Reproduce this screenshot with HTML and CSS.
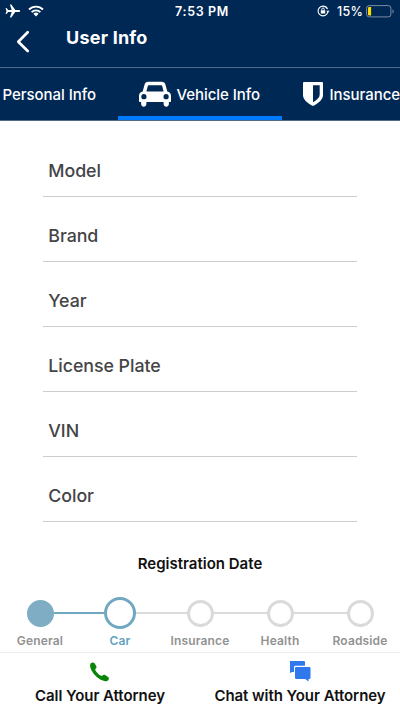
FILE: index.html
```
<!DOCTYPE html>
<html lang="en">
<head>
<meta charset="utf-8">
<title>User Info</title>
<link rel="stylesheet" href="styles.css">
</head>
<body>
<div class="status">
  <div class="status-left">
    <svg class="plane" width="16" height="14" viewBox="0 0 16 14"><path d="M15.2 7c0-.7-.8-1-1.6-1h-3.3L6.3.6H4.9L6.7 6H3.2L1.6 4H.6l.8 3-.8 3h1l1.6-2h3.5l-1.8 5.4h1.4L10.3 8h3.3c.8 0 1.6-.3 1.6-1z" fill="#fff"/></svg>
    <svg class="wifi" width="16" height="12" viewBox="0 0 16 12"><g fill="none" stroke="#fff" stroke-width="1.8"><path d="M1 4.5a10 10 0 0 1 14 0"/><path d="M3.6 7.2a6.3 6.3 0 0 1 8.800 0"/></g><path d="M8 11.400 5.400 8.800a3.800 3.800 0 0 1 5.200 0z" fill="#fff"/></svg>
  </div>
  <div class="time">7:53 PM</div>
  <div class="status-right">
    <svg width="13" height="12" viewBox="0 0 13 12"><circle cx="6" cy="6" r="4.9" fill="none" stroke="#fff" stroke-width="1.1" stroke-dasharray="28 2.8"/><path d="m9.3 5.8 1.7 2 1.6-2z" fill="#fff"/><rect x="3.8" y="5.2" width="4.4" height="3.4" rx=".4" fill="#fff"/><path d="M4.8 5.3V4.2a1.2 1.2 0 0 1 2.4 0v1.1" fill="none" stroke="#fff" stroke-width=".9"/></svg>
    <span class="percent">15%</span>
    <svg width="29" height="13" viewBox="0 0 29 13"><rect x=".6" y=".6" width="24.3" height="11.3" rx="2.6" fill="none" stroke="#7c8ba3" stroke-width="1"/><path d="M26.5 4.2c1.7.8 1.7 3.4 0 4.2z" fill="#7c8ba3"/><path d="M3.2 2.1h1.9v8.3H3.2A1.2 1.2 0 0 1 2 9.2V3.3a1.2 1.2 0 0 1 1.2-1.2z" fill="#fd0"/></svg>
  </div>
</div>
<header class="header">
  <svg width="14" height="24" viewBox="0 0 14 24"><path d="M11.7 2.3 2.3 11.800l9.400 9.200" fill="none" stroke="#fff" stroke-width="2.7" stroke-linecap="round" stroke-linejoin="round"/></svg>
  <h1>User Info</h1>
</header>
<nav class="tabs">
  <div class="tab tab-personal"><span>Personal Info</span></div>
  <div class="tab tab-vehicle">
    <svg width="34" height="26" viewBox="0 0 34 26"><path fill="#fff" fill-rule="evenodd" d="M10.3.8h13.400c2 0 3.300 1 3.800 2.900l1.800 6.900c2.300.4 3.700 2 3.700 4.300v5.300c0 .5-.3.8-.8.8h-1.300v1.700c0 3.900-5.300 3.900-5.300 0V21H8.400v1.700c0 3.900-5.300 3.900-5.300 0V21H1.800c-.5 0-.8-.3-.8-.8v-5.300c0-2.300 1.400-3.900 3.700-4.300l1.800-6.900C7 1.800 8.300.8 10.300.8zM10.700 4.200c-.5 0-.8.2-.9.7L8.400 10.500h17.200L24.200 4.900c-.1-.5-.4-.7-.9-.7zM5.900 13.100a2.600 2.600 0 1 0 0 5.200 2.600 2.600 0 0 0 0-5.200zm22.200 0a2.600 2.600 0 1 0 0 5.200 2.600 2.600 0 0 0 0-5.200z"/></svg>
    <span>Vehicle Info</span>
  </div>
  <div class="tab tab-insurance">
    <svg width="22" height="26" viewBox="0 0 22 26"><path fill="#fff" fill-rule="evenodd" d="M1.900 1h18.200c.5 0 .9.400.9.900v12.200c0 4.700-4.500 8.400-10 11C5.500 22.500 1 18.800 1 14.100V1.900c0-.5.400-.9.900-.9zM11 4.300v17c4.200-2.400 6.700-4.700 6.700-7.700V4.300z"/></svg>
    <span>Insurance</span>
  </div>
</nav>
<main>
  <form class="form">
    <div class="field"><span>Model</span></div>
    <div class="field"><span>Brand</span></div>
    <div class="field"><span>Year</span></div>
    <div class="field"><span>License Plate</span></div>
    <div class="field"><span>VIN</span></div>
    <div class="field"><span>Color</span></div>
  </form>
  <div class="date">Registration Date</div>
  <div class="stepper">
    <div class="step done"><div class="rail"><i></i><b></b><i class="blue"></i></div><span>General</span></div>
    <div class="step active"><div class="rail"><i class="blue"></i><b></b><i></i></div><span>Car</span></div>
    <div class="step"><div class="rail"><i></i><b></b><i></i></div><span>Insurance</span></div>
    <div class="step"><div class="rail"><i></i><b></b><i></i></div><span>Health</span></div>
    <div class="step"><div class="rail"><i></i><b></b><i></i></div><span>Roadside</span></div>
  </div>
</main>
<footer class="footer">
  <div class="action call">
    <svg width="20" height="20" viewBox="0 0 20 20"><path fill="#0a850a" d="M1.100 1.100C2.300.2 4 .3 4.900 1.700l1.300 2.200c.6 1 .3 2-.6 2.800-.6.500-.5 1 .1 2 1.400 2.100 2.900 3.600 4.900 4.900.8.500 1.300.6 1.900 0 .9-.9 1.900-1 2.900-.4l2.400 1.500c1.300.8 1.400 2.200.6 3.200-1.100 1.400-3 1.700-5.500.7C7.200 16.500 2.500 11.400.6 6.200-.1 4-.2 2.200 1.100 1.100z"/></svg>
    <span>Call Your Attorney</span>
  </div>
  <div class="action chat">
    <svg width="22" height="21" viewBox="0 0 22 21"><path fill="#2f78ed" d="M1.300 0h13.500c.7 0 1.200.5 1.200 1.200v3.500H6.500C5.600 4.700 5 5.300 5 6.200V11H3.200L1 12V1.200C1 .5.600 0 1.300 0z"/><path fill="#2f78ed" d="M7.200 6h13.100c.7 0 1.200.5 1.200 1.200v9.500c0 .7-.5 1.200-1.200 1.200h-.8v2.600L16.200 18h-9c-.7 0-1.200-.5-1.200-1.200V7.200C6 6.500 6.500 6 7.200 6z"/></svg>
    <span>Chat with Your Attorney</span>
  </div>
</footer>
</body>
</html>
```
FILE: styles.css
```
* { box-sizing: border-box; }
body {
  margin: 0;
  width: 400px;
  height: 711px;
  overflow: hidden;
  display: flex;
  flex-direction: column;
  background: #fff;
  color: #111;
  font-family: Inter, "Liberation Sans", sans-serif;
}
svg { display: block; flex: none; }
span { white-space: nowrap; }
.status {
  height: 22px;
  flex: none;
  display: grid;
  grid-template-columns: 1fr auto 1fr;
  align-items: center;
  background: #002855;
  color: #fff;
  font-size: 12.5px;
  font-weight: 600;
}
.status-left { display: flex; align-items: center; padding-left: 5px; gap: 7px; }
.time { letter-spacing: .65px; padding-left: 4px; }
.status-right { display: flex; align-items: center; justify-content: flex-end; padding-right: 5px; }
.percent { margin: 0 3px 0 7px; font-weight: 500; letter-spacing: .2px; }
.header {
  height: 46px;
  flex: none;
  display: flex;
  background: #002855;
  border-bottom: 1px solid #53698a;
  color: #fff;
  padding-left: 16px;
}
.header svg { margin-top: 8px; }
h1 { margin: 4px 0 0 36px; font-size: 18px; line-height: 24px; font-weight: 700; letter-spacing: .22px; }
.tabs {
  height: 53px;
  flex: none;
  display: flex;
  overflow: hidden;
  background: #002855;
  color: #fff;
  font-size: 15px;
  font-weight: 500;
  letter-spacing: -.05px;
  border-bottom: 1px solid #53698a;
}
.tab { display: flex; align-items: center; flex: none; height: 52px; }
.tab-personal { width: 118px; padding-left: 2.5px; }
.tab-vehicle { width: 164px; padding-left: 20px; gap: 4.5px; border-bottom: 4px solid #007aff; padding-top: 4px; }
.tab-insurance { padding-left: 20px; gap: 5.5px; }
.form { margin: 24px 43px 0; }
.field {
  height: 52px;
  display: flex;
  align-items: center;
  margin-bottom: 13px;
  padding-left: 5.3px;
  border-bottom: 1px solid #cbcbd0;
  font-size: 17.8px;
  font-weight: 500;
  letter-spacing: -.05px;
  color: #444446;
}
.date { margin-top: 32px; line-height: 20px; text-align: center; font-size: 15px; font-weight: 600; }
.stepper { display: flex; margin-top: 22px; }
.step { width: 80px; flex: none; text-align: center; color: #929292; font-size: 12px; font-weight: 600; line-height: 14px; letter-spacing: .15px; }
.rail { height: 34px; display: flex; align-items: center; margin-bottom: 4px; }
.rail i { flex: 1; height: 2px; background: #dadada; }
.rail b { width: 27px; height: 27px; flex: none; border-radius: 50%; border: 3px solid #dadada; }
.rail .blue { background: #71a8c1; }
.step:first-child i:first-child, .step:last-child i:last-child { visibility: hidden; }
.done b { background: #7eadc4; border-color: #7eadc4; }
.active b { width: 32px; height: 32px; border-color: #71a8c1; }
.active span { color: #65a2bf; }
.footer {
  margin-top: auto;
  height: 59px;
  flex: none;
  display: flex;
  border-top: 1px solid #ececec;
  font-size: 15px;
  font-weight: 600;
  letter-spacing: -.05px;
}
.action { width: 200px; display: flex; flex-direction: column; align-items: center; padding-top: 9px; }
.action span { line-height: 20px; margin-top: 4px; }
.chat { padding-top: 8px; }
.chat svg { margin-right: 1px; }
.chat span { margin-top: 4px; }
```
